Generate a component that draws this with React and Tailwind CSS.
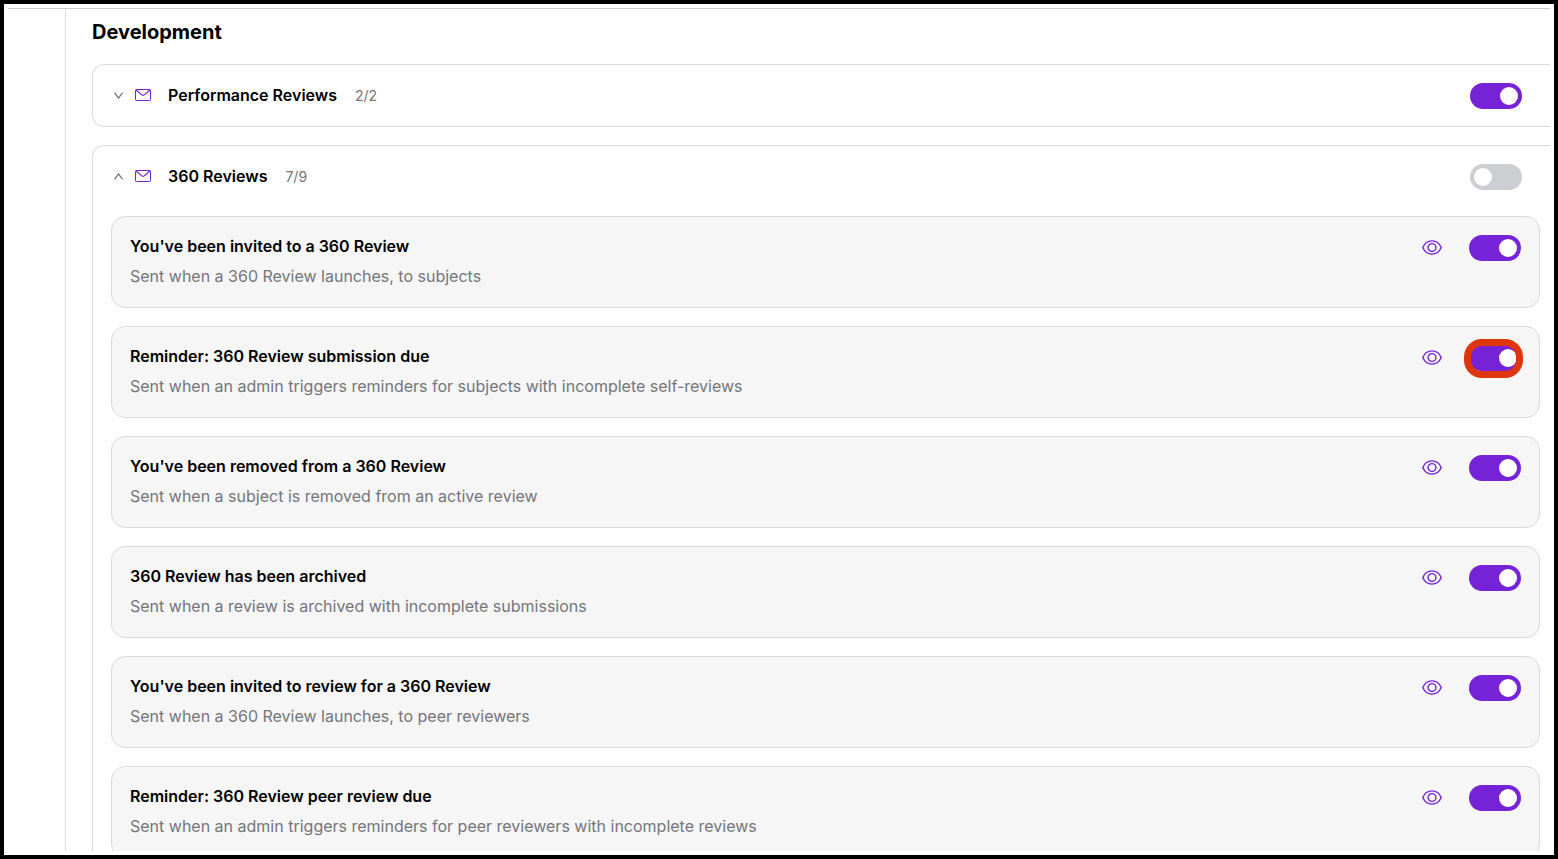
import React, { useState } from 'react';
import clsx from 'clsx';

const reviewEmails = [
  {
    id: 'subject-invite',
    title: "You've been invited to a 360 Review",
    description: 'Sent when a 360 Review launches, to subjects',
  },
  {
    id: 'subject-reminder',
    title: 'Reminder: 360 Review submission due',
    description: 'Sent when an admin triggers reminders for subjects with incomplete self-reviews',
    highlighted: true,
  },
  {
    id: 'subject-removed',
    title: "You've been removed from a 360 Review",
    description: 'Sent when a subject is removed from an active review',
  },
  {
    id: 'archived',
    title: '360 Review has been archived',
    description: 'Sent when a review is archived with incomplete submissions',
  },
  {
    id: 'peer-invite',
    title: "You've been invited to review for a 360 Review",
    description: 'Sent when a 360 Review launches, to peer reviewers',
  },
  {
    id: 'peer-reminder',
    title: 'Reminder: 360 Review peer review due',
    description: 'Sent when an admin triggers reminders for peer reviewers with incomplete reviews',
  },
];

const MailIcon = () => (
  <svg width="16" height="12" viewBox="0 0 16 12" fill="none" stroke="#7622d7" aria-hidden="true">
    <rect x="0.5" y="0.5" width="15" height="11" rx="0.8" />
    <path d="M1 1l5.9 4.9a1.8 1.8 0 0 0 2.2 0L15 1" strokeWidth="1.2" />
  </svg>
);

const EyeIcon = () => (
  <svg width="20" height="16" viewBox="0 0 20 16" fill="none" stroke="#7622d7" strokeWidth="1.4" aria-hidden="true">
    <path d="M0.8 7.5C2.5 3.4 6 0.9 10 0.9S17.5 3.4 19.2 7.5C17.5 11.6 14 14.1 10 14.1S2.5 11.6 0.8 7.5z" />
    <circle cx="10" cy="7.5" r="3.9" />
  </svg>
);

const Chevron = ({ open }) => (
  <svg width="9" height="7" viewBox="0 0 9 7" fill="none" stroke="#6b6b70" strokeWidth="1.2" aria-hidden="true">
    <path d={open ? 'M0.5 6.3L4.5 0.9L8.5 6.3' : 'M0.5 0.7L4.5 6.1L8.5 0.7'} />
  </svg>
);

const Toggle = ({ label, defaultChecked, highlighted }) => (
  <span className="relative flex shrink-0">
    <input
      type="checkbox"
      role="switch"
      aria-label={label}
      defaultChecked={defaultChecked}
      className="flex h-[26px] w-[52px] cursor-pointer appearance-none items-center rounded-full bg-[#cdced2] px-1 before:block before:size-[18px] before:rounded-full before:bg-white before:content-[''] checked:justify-end checked:bg-[#7622d7]"
    />
    {highlighted && (
      <span className="pointer-events-none absolute -top-1.5 -left-[5px] h-[39px] w-[59px] rounded-[18px] border-7 border-[#de350b]" />
    )}
  </span>
);

const EmailRow = ({ email }) => (
  <li className="flex items-start justify-between rounded-[14px] border border-[#dadadd] bg-[#f6f6f6] px-[18px] pt-[18px] pb-5">
    <div className="flex flex-col gap-2">
      <h4 className="text-base leading-[22px] font-semibold">{email.title}</h4>
      <p className="text-base leading-[22px] text-[#75757a]">{email.description}</p>
    </div>
    <div className="flex items-center gap-[27px]">
      <button type="button" aria-label={`Preview ${email.title}`} className="cursor-pointer">
        <EyeIcon />
      </button>
      <Toggle label={email.title} defaultChecked highlighted={email.highlighted} />
    </div>
  </li>
);

const EmailGroup = ({ title, count, enabled, defaultOpen, children }) => {
  const [open, setOpen] = useState(defaultOpen);

  return (
    <section className="rounded-l-xl border border-r-0 border-[#dadadd]">
      <div className="flex h-[61px] items-center justify-between pr-7 pl-[21px]">
        <button
          type="button"
          aria-expanded={open}
          onClick={() => setOpen(!open)}
          className="flex cursor-pointer items-center"
        >
          <Chevron open={open} />
          <span className="ml-3 flex items-center gap-[17px] pb-0.5">
            <MailIcon />
            <span className="text-base leading-6 font-semibold">{title}</span>
          </span>
          <span className="ml-[18px] text-sm leading-6 text-[#75757a]">{count}</span>
        </button>
        <Toggle label={title} defaultChecked={enabled} />
      </div>
      {open && children}
    </section>
  );
};

export default function App() {
  return (
    <div className={clsx('h-screen border-4 border-black bg-white p-1', "font-[Inter,'Noto_Sans',sans-serif] text-black")}>
      <div className="flex h-full overflow-hidden border-t border-[#cdced2]">
        <aside className="w-[57px] shrink-0" />
        <main className="min-w-0 flex-1 border-l border-[#dadadd] pt-[9px] pl-[26px]">
          <h2 className="text-xl leading-7 font-bold">Development</h2>
          <div className="mt-[18px] flex flex-col gap-[18px]">
            <EmailGroup title="Performance Reviews" count="2/2" enabled defaultOpen={false} />
            <EmailGroup title="360 Reviews" count="7/9" enabled={false} defaultOpen>
              <ul className="flex flex-col gap-[18px] pt-[9px] pr-2.5 pb-[18px] pl-[18px]">
                {reviewEmails.map((email) => (
                  <EmailRow key={email.id} email={email} />
                ))}
              </ul>
            </EmailGroup>
          </div>
        </main>
      </div>
    </div>
  );
}
